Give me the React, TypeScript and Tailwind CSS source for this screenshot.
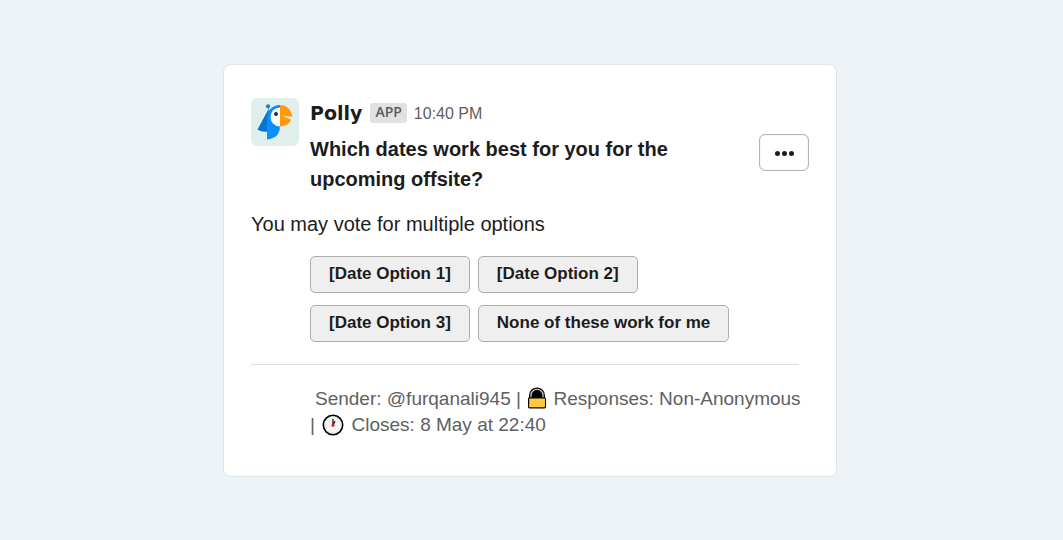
import { FunctionComponent } from "react";

const options = [
  "[Date Option 1]",
  "[Date Option 2]",
  "[Date Option 3]",
  "None of these work for me",
];

const PollyAvatar: FunctionComponent = () => {
  return (
    <svg
      viewBox="0 0 48 48"
      className="w-12 h-12 shrink-0 rounded-md bg-[#e0eeec]"
      role="img"
      aria-label="Polly"
    >
      <path d="M17 12 L6.5 31.5 Q11 34.5 17 33.5 L21 18 Z" fill="#0676d4" />
      <path
        d="M17 9 L18.5 12 Q22.5 7 29 7 V28 Q29 40 16 41.5 V33.5 Q15 24 17.5 13 Z"
        fill="#0d8ffb"
      />
      <circle cx="17" cy="8.3" r="2.1" fill="#1d7fc4" />
      <path d="M29 9.5 A9.5 9.5 0 0 0 29 28.5 Z" fill="#fff" />
      <circle cx="25" cy="16" r="1.9" fill="#16264a" />
      <path
        d="M29 7 C35.5 7 40.5 11.5 41.3 18.8 L32 18 L40.3 21.8 Q37.5 28 29 28.5 Z"
        fill="#ff9a0a"
      />
    </svg>
  );
};

const LockIcon: FunctionComponent = () => {
  return (
    <svg
      viewBox="0 0 20 22"
      className="mx-px inline-block w-5 h-[22px] align-[-4px]"
      aria-hidden="true"
    >
      <path d="M2 12 V8.5 A8 8 0 0 1 18 8.5 V12 Z" fill="#000" />
      <path
        d="M4 10.5 V8 A6 5.7 0 0 1 16 8 V10.5"
        fill="none"
        stroke="#c4c8ca"
        strokeWidth="1.3"
      />
      <rect x="1" y="10.5" width="18" height="11" rx="1.4" fill="#000" />
      <rect x="2.2" y="11.6" width="15.8" height="8.6" rx="0.5" fill="#ffc83d" />
    </svg>
  );
};

const ClockIcon: FunctionComponent = () => {
  return (
    <svg
      viewBox="0 0 22 22"
      className="mx-0.5 inline-block w-[22px] h-[22px] align-[-5px]"
      aria-hidden="true"
    >
      <circle cx="11" cy="11" r="9.7" fill="#f6f6f6" stroke="#000" strokeWidth="1.6" />
      <circle
        cx="11"
        cy="11"
        r="7.8"
        fill="none"
        stroke="#b4b4b4"
        strokeWidth="1"
        strokeDasharray="0.8 3.284"
      />
      <path d="M11 11 V5" stroke="#111" strokeWidth="1.3" />
      <path d="M11 11 L13 7.3" stroke="#111" strokeWidth="1.3" />
      <path d="M11 7 V11" stroke="#e81224" strokeWidth="0.7" />
      <circle cx="11" cy="11.2" r="1.5" fill="#e81224" />
    </svg>
  );
};

const App: FunctionComponent = () => {
  return (
    <main className="flex min-h-screen items-center justify-center bg-[#edf3f7] pr-[3px] font-['Liberation_Sans',Arial,sans-serif] text-[#1d1c1d]">
      <article className="w-full max-w-[614px] rounded-lg border border-[#dfe6ea] bg-white px-[27px] pt-[33px] pb-[38px]">
        <header className="flex items-start">
          <PollyAvatar />
          <div className="ml-[11px] flex-1">
            <div className="flex h-[30px] items-center">
              <span className="pt-0.5 font-['DejaVu_Sans',sans-serif] text-[19px] font-bold">
                Polly
              </span>
              <span className="ml-2 h-5 rounded-[3px] bg-[#e1e1e1] px-[5px] font-['Open_Sans',sans-serif] text-[14px] leading-[17px] font-semibold text-[#5b5a5c]">
                APP
              </span>
              <time className="ml-[7px] pt-0.5 text-[16px] text-[#616061]">
                10:40 PM
              </time>
            </div>
            <div className="mt-1.5 flex items-start justify-between">
              <h1 className="max-w-[400px] text-[20px] leading-[30px] font-bold">
                Which dates work best for you for the upcoming offsite?
              </h1>
              <button
                type="button"
                aria-label="More actions"
                className="flex h-[37px] w-[50px] items-center justify-center gap-0.5 rounded-md border border-[#b5b5b5] bg-white pt-0.5 shadow-[inset_0_0_1px_#b5b5b5]"
              >
                <span className="h-[5px] w-[5px] rounded-full bg-[#1d1c1d]" />
                <span className="h-[5px] w-[5px] rounded-full bg-[#1d1c1d]" />
                <span className="h-[5px] w-[5px] rounded-full bg-[#1d1c1d]" />
              </button>
            </div>
          </div>
        </header>
        <p className="mt-[15px] text-[20px] leading-[30px]">
          You may vote for multiple options
        </p>
        <div className="mt-[17px] mr-2.5 ml-[59px] flex flex-wrap gap-x-2 gap-y-3">
          {options.map((option) => (
            <button
              key={option}
              type="button"
              className="h-[37px] rounded-[5px] border border-[#adadad] bg-[#efefef] px-[18px] text-[17px] font-bold"
            >
              {option}
            </button>
          ))}
        </div>
        <hr className="mt-[22px] mr-2.5 border-[#dddddd]" />
        <p className="mt-[21px] mr-1 ml-[59px] indent-[5px] text-[19px] leading-[26px] text-[#616061]">
          <span>Sender: @furqanali945 |</span> <LockIcon />{" "}
          <span>Responses: Non-Anonymous</span> <span>|</span> <ClockIcon />{" "}
          <span>Closes: 8 May at 22:40</span>
        </p>
      </article>
    </main>
  );
};

export default App;
